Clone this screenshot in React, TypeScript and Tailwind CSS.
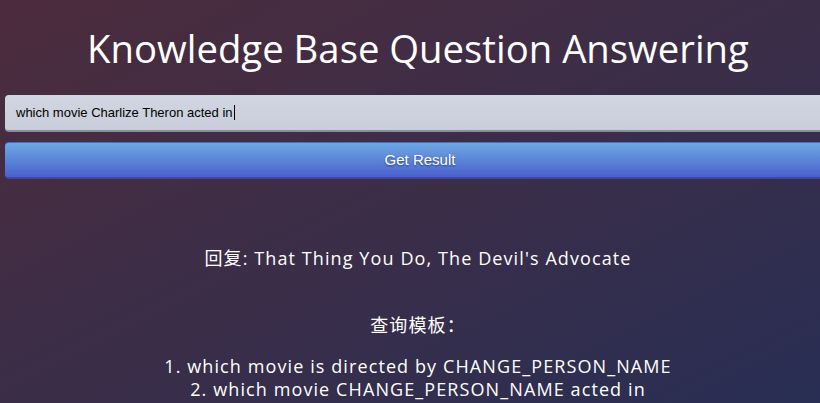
import React from "react";

export default function App() {
  return (
    <div
      className="w-[820px] h-[403px] overflow-hidden text-white bg-gradient-to-br from-[#4c2b3c] to-[#282e54]"
      style={{ fontFamily: '"Open Sans", "Noto Sans CJK SC", sans-serif' }}
    >
      <div className="w-[836px]">
        <h1 className="text-[38.3px] leading-[48px] text-center pt-[24px] font-normal">
          Knowledge Base Question Answering
        </h1>
        <div className="mt-[23px] pl-[5px]">
          <div
            className="w-[830px] h-[37px] rounded-[4px] bg-gradient-to-b from-[#d2d6e2] to-[#c8cdda] border-b-2 border-[#8a8d9c] flex items-center pl-[11px] text-[13px] text-black"
            style={{ fontFamily: '"Liberation Sans", Arial, sans-serif' }}
          >
            which movie Charlize Theron acted in
            <span className="inline-block w-px h-[15px] bg-black ml-[1px]" />
          </div>
          <div
            className="mt-[10px] w-[830px] h-[37px] rounded-[4px] bg-gradient-to-b from-[#6ea8e2] to-[#4b60cc] border-t border-[#4a6ad0] border-b-2 border-b-[#3b47b0] flex items-center justify-center text-[15px] text-white"
            style={{ fontFamily: '"Liberation Sans", Arial, sans-serif', textShadow: "0 1px 2px rgba(0,0,0,0.45)" }}
          >
            Get Result
          </div>
        </div>
        <div className="text-center text-[18px] tracking-[1.1px] mt-[67px] leading-[24px]">
          <p>回复: That Thing You Do, The Devil's Advocate</p>
          <p className="mt-[43px]">查询模板：</p>
          <div className="mt-[18px] leading-[23px]">
            <p>1. which movie is directed by CHANGE_PERSON_NAME</p>
            <p>2. which movie CHANGE_PERSON_NAME acted in</p>
          </div>
        </div>
      </div>
    </div>
  );
}
